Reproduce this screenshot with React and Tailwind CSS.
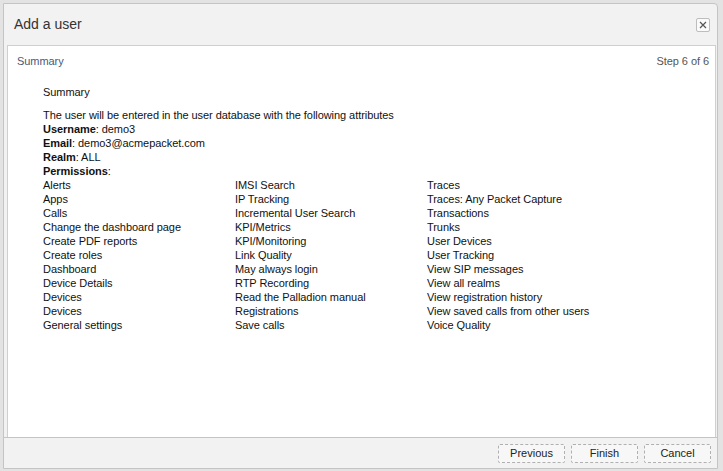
const COL1 = [
  'Alerts',
  'Apps',
  'Calls',
  'Change the dashboard page',
  'Create PDF reports',
  'Create roles',
  'Dashboard',
  'Device Details',
  'Devices',
  'Devices',
  'General settings',
]

const COL2 = [
  'IMSI Search',
  'IP Tracking',
  'Incremental User Search',
  'KPI/Metrics',
  'KPI/Monitoring',
  'Link Quality',
  'May always login',
  'RTP Recording',
  'Read the Palladion manual',
  'Registrations',
  'Save calls',
]

const COL3 = [
  'Traces',
  'Traces: Any Packet Capture',
  'Transactions',
  'Trunks',
  'User Devices',
  'User Tracking',
  'View SIP messages',
  'View all realms',
  'View registration history',
  'View saved calls from other users',
  'Voice Quality',
]

function Column({ items }) {
  return (
    <div className="flex flex-col">
      {items.map((item, i) => (
        <div key={i} className="h-[14px] leading-[14px] whitespace-nowrap">
          {item}
        </div>
      ))}
    </div>
  )
}

function DialogButton({ children }) {
  return (
    <button
      type="button"
      className="w-[67px] h-[19px] border border-dashed border-[#b0b0b0] rounded-[2px] bg-[#f7f7f7] text-[11px] leading-[17px] text-[#222]"
    >
      {children}
    </button>
  )
}

export default function App() {
  return (
    <div
      className="w-[723px] h-[471px] bg-[#e3e3e3] pl-[3px] pt-[3px] overflow-hidden"
      style={{ fontFamily: '"Liberation Sans", Arial, sans-serif' }}
    >
      <div className="w-[715px] h-[466px] bg-[#f2f2f2] border border-[#c4c4c4] rounded-tr-[4px] flex flex-col">
        <div className="h-[41px] flex items-center justify-between pl-[10px] pr-[7px]">
          <span className="text-[14px] text-[#333]">Add a user</span>
          <div className="w-[14px] h-[14px] border border-[#bdbdbd] rounded-[2px] bg-[#fafafa] flex items-center justify-center">
            <svg width="8" height="8" viewBox="0 0 8 8">
              <path d="M1 1 L7 7 M7 1 L1 7" stroke="#555" strokeWidth="1.2" />
            </svg>
          </div>
        </div>
        <div className="ml-[3px] mr-[1px] flex-1 bg-white border border-[#cfcfcf] text-[11px] text-[#111] tracking-[-0.06px]">
          <div className="flex justify-between pt-[8px] pl-[9px] pr-[6px] leading-[14px]">
            <span className="text-[#4b5878]">Summary</span>
            <span className="text-[#555]">Step 6 of 6</span>
          </div>
          <div className="pl-[35px] pt-[17px]">
            <div className="leading-[14px]">Summary</div>
            <div className="mt-[9px] leading-[14px]">
              <div>The user will be entered in the user database with the following attributes</div>
              <div>
                <b>Username</b>: demo3
              </div>
              <div>
                <b>Email</b>: demo3@acmepacket.com
              </div>
              <div>
                <b>Realm</b>: ALL
              </div>
              <div>
                <b>Permissions</b>:
              </div>
            </div>
            <div className="grid grid-cols-[192px_192px_192px]">
              <Column items={COL1} />
              <Column items={COL2} />
              <Column items={COL3} />
            </div>
          </div>
        </div>
        <div className="h-[31px] flex items-center justify-end gap-[6px] pr-[6px] border-t border-[#c4c4c4] -mt-[1px]">
          <DialogButton>Previous</DialogButton>
          <DialogButton>Finish</DialogButton>
          <DialogButton>Cancel</DialogButton>
        </div>
      </div>
    </div>
  )
}
